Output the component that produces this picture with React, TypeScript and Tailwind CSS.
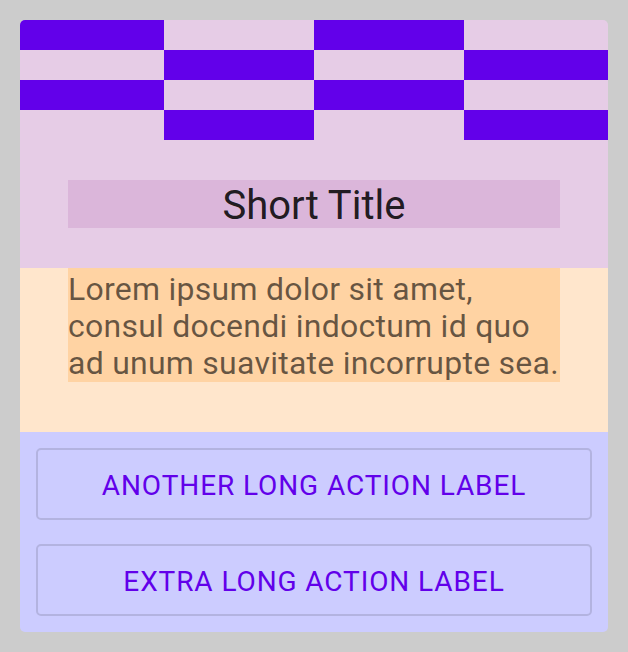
import React from 'react';

// Checker strip at the top of the card: 150x30 tiles, centred on the card
const TILE_W = 150;
const TILE_H = 30;
const CARD_W = 588;
const ROWS = 4;

const CheckerStrip: React.FC = () => {
  const center = CARD_W / 2;
  const rects: React.ReactNode[] = [];
  for (let r = 0; r < ROWS; r++) {
    for (let c = -2; c < 2; c++) {
      const x = center + c * TILE_W;
      // purple when column index parity matches row parity
      const purple = (((c + r) % 2) + 2) % 2 === 0;
      if (!purple) continue;
      rects.push(
        <rect key={`${r}-${c}`} x={x} y={r * TILE_H} width={TILE_W} height={TILE_H} fill="#6200EA" />
      );
    }
  }
  return (
    <svg
      className="block h-[120px] w-full"
      viewBox={`0 0 ${CARD_W} ${ROWS * TILE_H}`}
      preserveAspectRatio="none"
      xmlns="http://www.w3.org/2000/svg"
    >
      {rects}
    </svg>
  );
};

const actions = ['Another long action label', 'Extra long action label'];

const App: React.FC = () => {
  return (
    <div className="min-h-screen bg-[#cccccc] p-5 font-['Roboto',sans-serif]">
      <div className="overflow-hidden rounded-[5px]">
        {/* Header with pattern + title */}
        <div className="bg-[#E6CCE6] pb-10">
          <CheckerStrip />
          <div className="mx-12 mt-10 bg-[#DBB6DA] pt-[3px] text-center text-[40px] leading-[45px] text-black/[0.87]">
            Short Title
          </div>
        </div>

        {/* Body copy */}
        <div className="bg-[#FFE6CC] pb-[50px]">
          <p className="mx-12 bg-[#FFD3A3] pt-[3px] text-[32px] leading-[37px] tracking-[0.25px] text-black/60">
            Lorem ipsum dolor sit amet, consul docendi indoctum id quo ad unum suavitate incorrupte sea.
          </p>
        </div>

        {/* Actions */}
        <div className="flex flex-col gap-6 bg-[#CCCCFF] p-4">
          {actions.map((label) => (
            <button
              key={label}
              type="button"
              className="h-[72px] w-full rounded-[5px] border-2 border-black/[0.12] pt-[3px] text-[28px] font-normal uppercase tracking-[0.9px] text-[#6200EA]"
            >
              {label}
            </button>
          ))}
        </div>
      </div>
    </div>
  );
};

export default App;
